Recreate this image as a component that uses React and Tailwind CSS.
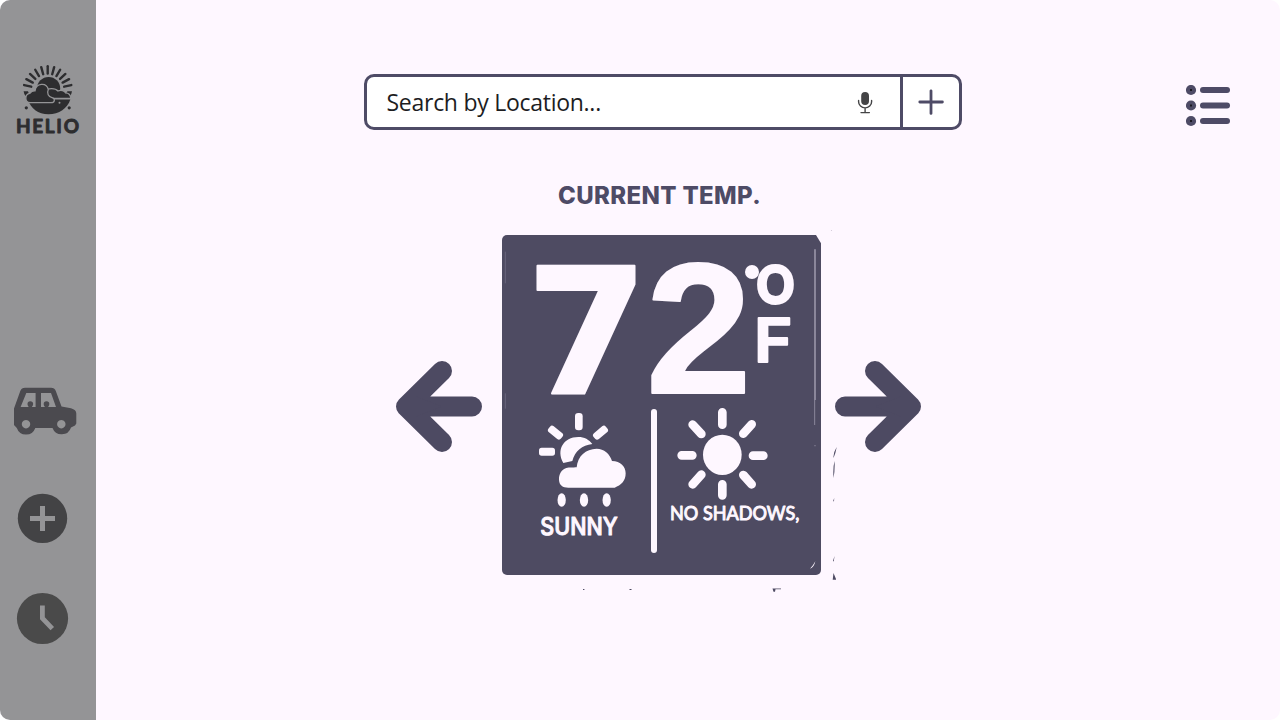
import React from "react";

const RAYS = [-77, -62, -47, -31, -15.5, 0, 15.5, 31, 47, 62, 77];

function HelioLogo() {
  return (
    <svg className="block h-[76px] w-[96px]" viewBox="0 62 96 76" fill="#2d2d2f">
      {RAYS.map((a) => (
        <path key={a} d="M47.7 66.3V73.6" stroke="#2d2d2f" strokeWidth="2.4" strokeLinecap="round" transform={`rotate(${a} 47.7 90.5)`} />
      ))}
      <path d="M23.6 91.3h4.4l1.2 3.2-3.6 1.6q-1.6-1.8-2-4.8zM72 91.3h-4.6l-1.4 2.7 4 2q1.6-1.8 2-4.7z" />
      <circle cx="48.6" cy="88.5" r="11.6" />
      <path d="M28 99.5H70.300C67.500 108.500 59 114.200 48.500 114.200S30.500 108.500 28 99.500z" />
      <path
        d="M50 98.300C46 97 44.500 92 46.500 89.300 50 88.500 55.500 88 58 91 61 89.500 64.500 90.800 65.500 92.800 68.500 92.800 70.500 95 70.800 98.300z"
        stroke="#949496"
        strokeWidth="1.300"
      />
      <path
        d="M30 102.700C24.500 102.500 24.500 94 29.800 93.300 31.300 91.300 33 90.600 35 90.800 36 83 46.500 82 48.300 89.500 46.500 93.500 48.500 97 52 97.600 55.500 98.600 55 102.700 51 102.700z"
        stroke="#949496"
        strokeWidth="1.300"
      />
      <circle cx="26.300" cy="107.800" r="1.600" />
      <circle cx="69.200" cy="107.800" r="1.600" />
      <circle cx="59.500" cy="102.800" r="1" fill="#949496" />
      <text x="16" y="132.600" fontFamily="Lato, sans-serif" fontWeight="700" fontSize="19" textLength="63" lengthAdjust="spacing" stroke="#2d2d2f" strokeWidth=".9" strokeLinejoin="round">
        HELIO
      </text>
    </svg>
  );
}

function CarIcon() {
  return (
    <svg className="mt-[248px] block h-[50px] w-[96px]" viewBox="0 386 96 50" fill="#4b4a4f">
      <path
        fillRule="evenodd"
        d="M25 387.700H51Q54.500 387.700 55.800 391L61.500 406.600 71 408.300Q76.300 409.800 76.300 413.500V423.500L75 425.500 71 427.500A9.800 9.800 0 0 1 52.500 428H35.300A9.800 9.800 0 0 1 16.800 428L14 425V408.500L20.300 391Q21.600 387.700 25 387.700zM26.300 393L20.600 407H35.600V393zM41 393V407H56L51 393zM26 420a4.200 4.200 0 1 0 .01 0zM61.300 420a4.200 4.200 0 1 0 .01 0z"
      />
      <circle cx="30.300" cy="404" r="2.800" />
      <circle cx="46.500" cy="404" r="2.800" />
      <path d="M28.500 405h3.600v2.500h-3.600zM44.700 405h3.600v2.500h-3.600z" />
    </svg>
  );
}

function Sidebar() {
  return (
    <nav className="flex h-full w-24 shrink-0 flex-col bg-[#949496] pt-[62px]">
      <HelioLogo />
      <CarIcon />
      <svg className="mt-[56px] block h-[53px] w-[96px]" viewBox="0 492 96 53">
        <circle cx="42.500" cy="518.400" r="24.700" fill="#434345" />
        <path d="M42.500 506v25M30 518.500h25" stroke="#949496" strokeWidth="5" />
      </svg>
      <svg className="mt-[46px] block h-[55px] w-[96px]" viewBox="0 591 96 55">
        <circle cx="42.500" cy="618.500" r="25.600" fill="#4a4a4a" />
        <path d="M42.400 605.500V618.200L52.300 628.600" fill="none" stroke="#949496" strokeWidth="4.800" />
      </svg>
    </nav>
  );
}

function SearchBar() {
  return (
    <div className="flex h-14 w-[598px] overflow-hidden rounded-[10px] border-[3px] border-[#4e4b66] bg-white">
      <div className="flex flex-1 items-center pl-[19.500px] pr-[26px]">
        <span className="flex-1 whitespace-nowrap font-['Open_Sans',sans-serif] text-[23px] leading-none tracking-[-0.270px] text-[#1d1d1f]">
          Search by Location...
        </span>
        <svg className="h-[24px] w-[18px]" viewBox="0 0 18 24" fill="none" stroke="#444446" strokeWidth="1.400" strokeLinecap="round">
          <rect x="5.200" y="2" width="7.800" height="13" rx="3.900" fill="#444446" stroke="none" />
          <path d="M2.600 10.500v1.200a6.500 6.200 0 0 0 13 0v-1.200M9.100 18v4.200M5 22.600h8.400" />
        </svg>
      </div>
      <div className="flex w-[59px] items-center justify-center border-l-[3px] border-[#4e4b66]">
        <svg className="h-[26px] w-[26px]" viewBox="0 0 26 26" stroke="#4e4b66" strokeWidth="2.800" strokeLinecap="round">
          <path d="M13 1.800v22.600M1.800 13h22.600" />
        </svg>
      </div>
    </div>
  );
}

function ListIcon() {
  return (
    <svg className="h-[42px] w-[45px]" viewBox="0 0 45 42">
      {[5, 20.500, 36].map((y) => (
        <g key={y}>
          <circle cx="5" cy={y} r="5.100" fill="#4e4b66" />
          <rect x="4" y={y - 1} width="2" height="2" fill="#1a1922" />
          <path d={`M17 ${y}H41`} stroke="#4e4b66" strokeWidth="6" strokeLinecap="round" />
        </g>
      ))}
    </svg>
  );
}

function Arrow({ className }) {
  return (
    <svg className={className} viewBox="0 -0.5 86 92" fill="none" stroke="#4d4a62" strokeWidth="20" strokeLinecap="round" strokeLinejoin="round">
      <path d="M46 10.500L10 46 46 81.500M12 46H76" />
      <path d="M20 36L46 46 20 56z" fill="#4d4a62" stroke="none" />
    </svg>
  );
}

function Temperature() {
  return (
    <svg className="block h-[165px] w-[319px] overflow-visible" viewBox="36 45 957 495" fill="#fef7ff" fontFamily="Inter, sans-serif">
      <path d="M978 45L993 70V45z" />
      <path d="M975 88V540" stroke="#aaa5b8" strokeWidth="4" />
      <path d="M46 95V190M46 520V540" stroke="#77738b" strokeWidth="2" />
      <g stroke="#fef7ff" strokeWidth="6" strokeLinejoin="round">
        <text transform="translate(107 518) scale(1.010 1)" fontFamily="DejaVu Sans, sans-serif" fontWeight="700" fontSize="524">7</text>
        <text transform="translate(467 518) scale(1.025 1)" fontFamily="Liberation Sans, sans-serif" fontWeight="700" fontSize="557">2</text>
        <text transform="translate(797 253) scale(.960 1)" fontWeight="700" fontSize="160">O</text>
        <text transform="translate(792 426) scale(1.070 1)" fontWeight="600" fontSize="183">F</text>
      </g>
      <circle cx="786" cy="156" r="21" />
    </svg>
  );
}

function SunnyPanel() {
  return (
    <svg className="block h-[175px] w-[149px]" viewBox="36 0 447 525" fill="#fef7ff">
      <path d="M46 0V26" stroke="#77738b" strokeWidth="2" />
      <rect x="255" y="39" width="23" height="52" rx="10" />
      <rect x="147" y="143" width="48" height="24" rx="8" />
      <rect x="-24" y="-11.500" width="48" height="23" rx="8" transform="translate(196.500 98) rotate(39)" />
      <rect x="-24" y="-11.500" width="48" height="23" rx="8" transform="translate(331.500 98) rotate(-40)" />
      <path d="M220 189C198 150 220 111 265 111 283 111 297 119 307 132 276 136 255 153 247 183z" />
      <path d="M235 263H374C393 256 407 243 407 220 407 199 392 184 366 183 360 162 342 146 320 146 287 147 263 168 260 202 249 203 238 201 229 204 214 208 206 224 207 240 208 256 218 263 235 263z" />
      <ellipse cx="215" cy="300" rx="12.500" ry="20.500" />
      <ellipse cx="282" cy="300" rx="12.500" ry="20.500" />
      <ellipse cx="350" cy="300" rx="12.500" ry="20.500" />
      <text x="151" y="404" fontFamily="Inter, sans-serif" fontWeight="500" fontSize="71" textLength="232" lengthAdjust="spacingAndGlyphs" stroke="#fef7ff" strokeWidth="3" strokeLinejoin="round">
        SUNNY
      </text>
    </svg>
  );
}

function ShadowsPanel() {
  return (
    <svg className="block h-[175px] w-[164px]" viewBox="-9 0 492 525" fill="#fef7ff">
      <path d="M464 0V75" stroke="#8b879c" strokeWidth="3" />
      <circle cx="465" cy="137" r="2" fill="#8b879c" />
      <path d="M466 484Q462 503 450 506Q460 496 466 484z" />
      <ellipse cx="187" cy="164.500" rx="58" ry="60.500" />
      <g stroke="#fef7ff" strokeWidth="26" strokeLinecap="round">
        <path d="M187 37V74M187 253V286M65 166H97M279 167H310M98 74L124 102M275 73L250 101M124 224L98 253M250 225L275 253" />
      </g>
      <text x="30" y="361" fontFamily="Lato, sans-serif" fontWeight="400" fontSize="58" textLength="388" lengthAdjust="spacingAndGlyphs" stroke="#fef7ff" strokeWidth="3" strokeLinejoin="round">
        NO SHADOWS,
      </text>
    </svg>
  );
}

function WeatherCard() {
  return (
    <section className="relative mx-5 mr-[14px] flex h-[340px] w-[319px] flex-col rounded-[5px] bg-[#4e4b62]">
      <Temperature />
      <div className="flex">
        <SunnyPanel />
        <div className="mt-[8.500px] h-[144px] w-[5.500px] rounded-full bg-[#fef7ff]" />
        <ShadowsPanel />
      </div>
      <svg className="absolute left-0 top-0 overflow-visible" width="319" height="340" viewBox="502 235 319 340" fill="#4e4b63">
        <path d="M836.700 447Q833 453 833.500 458 835.500 454 836.700 447zM834.600 461Q832.800 467 833.500 478 835 471 834.600 461zM834.200 498l-1 3 .8.500zM834.500 556l-1.500 5 .8.500zM833.500 573l2.500 6v.8h-3.300z" />
        <path d="M772.500 588.500h8.500v.8h-5.500l-.5 2.500h-1.500zM629.500 589h2v1h-2zM583 589h1.400v1H583z" />
        <circle cx="831.500" cy="230.500" r=".6" fill="#cfc8d6" />
      </svg>
    </section>
  );
}

export default function App() {
  return (
    <div className="h-[720px] w-[1280px] bg-white">
      <div className="flex h-full w-full overflow-hidden rounded-[10px] bg-[#fef7ff]">
        <Sidebar />
        <main className="flex flex-1 flex-col">
          <header className="flex items-start pl-[268px] pr-[49px] pt-[74px]">
            <SearchBar />
            <div className="ml-auto mt-[11px]">
              <ListIcon />
            </div>
          </header>
          <h1 className="ml-[462px] mt-[50px] h-[55px] whitespace-nowrap font-['Inter',sans-serif] text-[24px] font-extrabold leading-[32px] tracking-[0.350px] text-[#4e4b66]">
            CURRENT TEMP.
          </h1>
          <div className="ml-[300px] flex items-center">
            <Arrow className="mt-[2px] h-[92px] w-[86px]" />
            <WeatherCard />
            <Arrow className="mt-[2px] h-[92px] w-[86px] -scale-x-100" />
          </div>
        </main>
      </div>
    </div>
  );
}
